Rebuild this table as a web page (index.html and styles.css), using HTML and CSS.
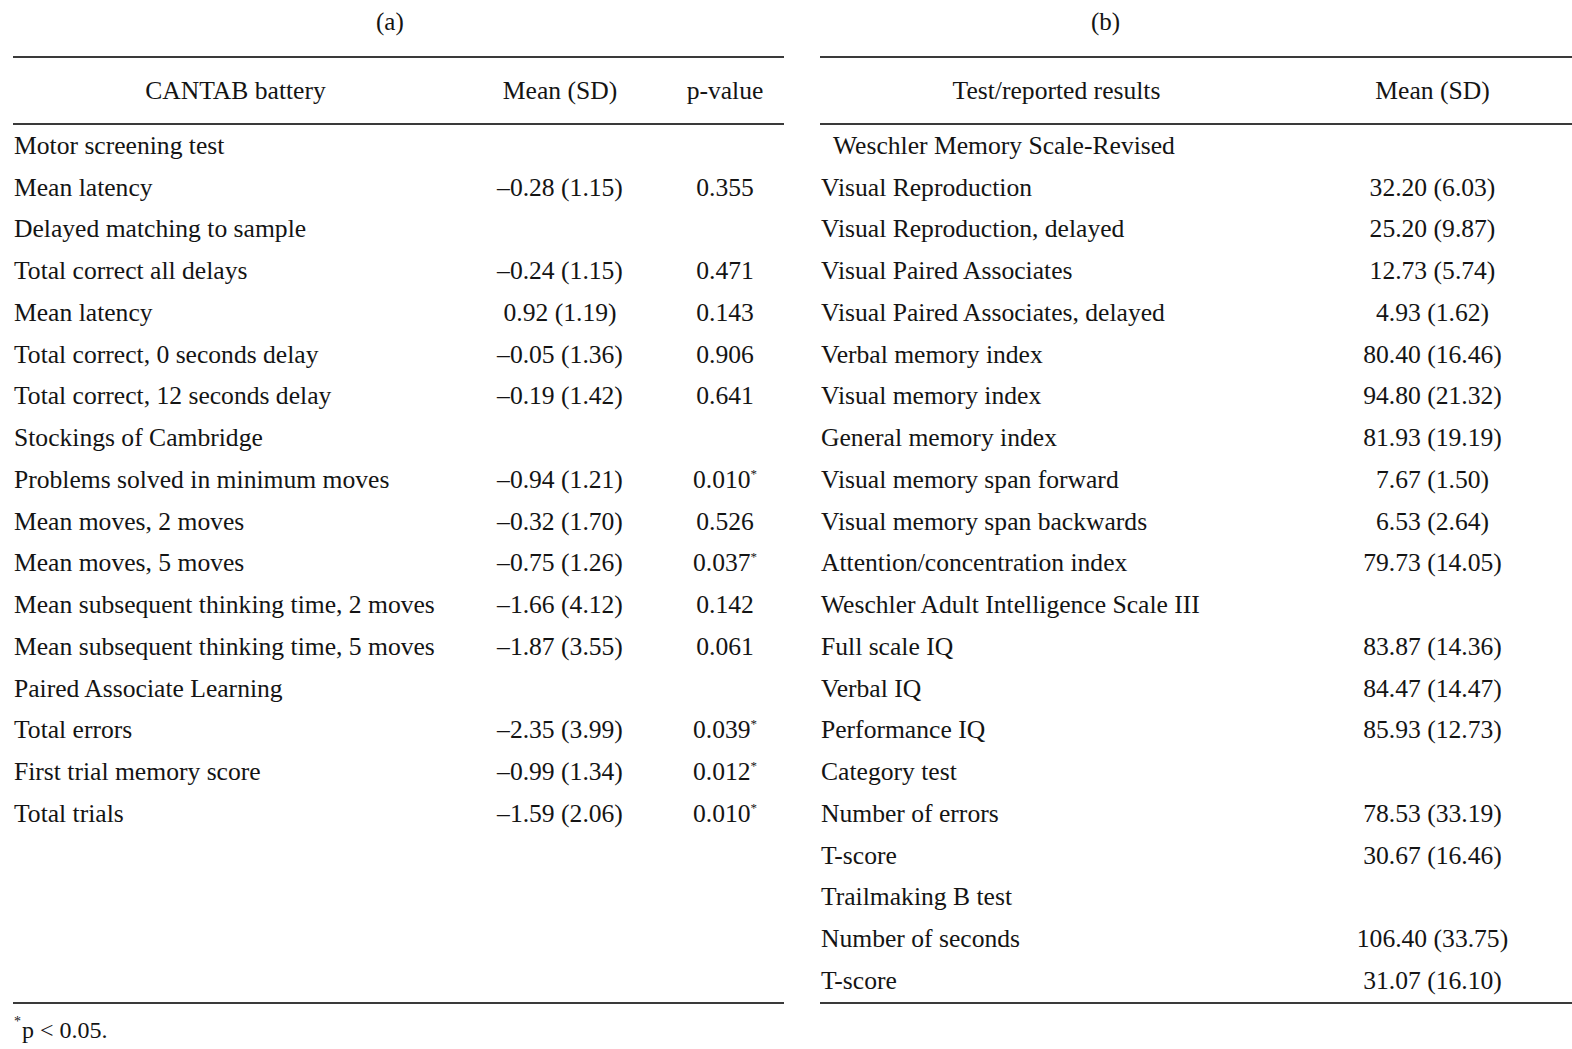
FILE: index.html
```html
<!DOCTYPE html>
<html>
<head>
<meta charset="utf-8">
<link rel="stylesheet" href="styles.css">
</head>
<body>
<div class="page">
  <div class="panels">
    <section class="panel panel-a">
      <div class="caption">(a)</div>
      <div class="tbl">
        <div class="row head">
          <div class="c c1 center">CANTAB battery</div>
          <div class="c center">Mean (SD)</div>
          <div class="c center pcol">p-value</div>
        </div>
        <div class="body">
          <div class="row"><div class="c c1">Motor screening test</div><div class="c"></div><div class="c"></div></div>
          <div class="row"><div class="c c1">Mean latency</div><div class="c center">–0.28 (1.15)</div><div class="c center pcol">0.355</div></div>
          <div class="row"><div class="c c1">Delayed matching to sample</div><div class="c"></div><div class="c"></div></div>
          <div class="row"><div class="c c1">Total correct all delays</div><div class="c center">–0.24 (1.15)</div><div class="c center pcol">0.471</div></div>
          <div class="row"><div class="c c1">Mean latency</div><div class="c center">0.92 (1.19)</div><div class="c center pcol">0.143</div></div>
          <div class="row"><div class="c c1">Total correct, 0 seconds delay</div><div class="c center">–0.05 (1.36)</div><div class="c center pcol">0.906</div></div>
          <div class="row"><div class="c c1">Total correct, 12 seconds delay</div><div class="c center">–0.19 (1.42)</div><div class="c center pcol">0.641</div></div>
          <div class="row"><div class="c c1">Stockings of Cambridge</div><div class="c"></div><div class="c"></div></div>
          <div class="row"><div class="c c1">Problems solved in minimum moves</div><div class="c center">–0.94 (1.21)</div><div class="c center pcol">0.010<sup>*</sup></div></div>
          <div class="row"><div class="c c1">Mean moves, 2 moves</div><div class="c center">–0.32 (1.70)</div><div class="c center pcol">0.526</div></div>
          <div class="row"><div class="c c1">Mean moves, 5 moves</div><div class="c center">–0.75 (1.26)</div><div class="c center pcol">0.037<sup>*</sup></div></div>
          <div class="row"><div class="c c1">Mean subsequent thinking time, 2 moves</div><div class="c center">–1.66 (4.12)</div><div class="c center pcol">0.142</div></div>
          <div class="row"><div class="c c1">Mean subsequent thinking time, 5 moves</div><div class="c center">–1.87 (3.55)</div><div class="c center pcol">0.061</div></div>
          <div class="row"><div class="c c1">Paired Associate Learning</div><div class="c"></div><div class="c"></div></div>
          <div class="row"><div class="c c1">Total errors</div><div class="c center">–2.35 (3.99)</div><div class="c center pcol">0.039<sup>*</sup></div></div>
          <div class="row"><div class="c c1">First trial memory score</div><div class="c center">–0.99 (1.34)</div><div class="c center pcol">0.012<sup>*</sup></div></div>
          <div class="row"><div class="c c1">Total trials</div><div class="c center">–1.59 (2.06)</div><div class="c center pcol">0.010<sup>*</sup></div></div>
        </div>
      </div>
    </section>
    <section class="panel panel-b">
      <div class="caption">(b)</div>
      <div class="tbl">
        <div class="row head">
          <div class="c c1 center">Test/reported results</div>
          <div class="c center">Mean (SD)</div>
        </div>
        <div class="body">
          <div class="row"><div class="c c1 indent">Weschler Memory Scale-Revised</div><div class="c"></div></div>
          <div class="row"><div class="c c1">Visual Reproduction</div><div class="c center">32.20 (6.03)</div></div>
          <div class="row"><div class="c c1">Visual Reproduction, delayed</div><div class="c center">25.20 (9.87)</div></div>
          <div class="row"><div class="c c1">Visual Paired Associates</div><div class="c center">12.73 (5.74)</div></div>
          <div class="row"><div class="c c1">Visual Paired Associates, delayed</div><div class="c center">4.93 (1.62)</div></div>
          <div class="row"><div class="c c1">Verbal memory index</div><div class="c center">80.40 (16.46)</div></div>
          <div class="row"><div class="c c1">Visual memory index</div><div class="c center">94.80 (21.32)</div></div>
          <div class="row"><div class="c c1">General memory index</div><div class="c center">81.93 (19.19)</div></div>
          <div class="row"><div class="c c1">Visual memory span forward</div><div class="c center">7.67 (1.50)</div></div>
          <div class="row"><div class="c c1">Visual memory span backwards</div><div class="c center">6.53 (2.64)</div></div>
          <div class="row"><div class="c c1">Attention/concentration index</div><div class="c center">79.73 (14.05)</div></div>
          <div class="row"><div class="c c1">Weschler Adult Intelligence Scale III</div><div class="c"></div></div>
          <div class="row"><div class="c c1">Full scale IQ</div><div class="c center">83.87 (14.36)</div></div>
          <div class="row"><div class="c c1">Verbal IQ</div><div class="c center">84.47 (14.47)</div></div>
          <div class="row"><div class="c c1">Performance IQ</div><div class="c center">85.93 (12.73)</div></div>
          <div class="row"><div class="c c1">Category test</div><div class="c"></div></div>
          <div class="row"><div class="c c1">Number of errors</div><div class="c center">78.53 (33.19)</div></div>
          <div class="row"><div class="c c1">T-score</div><div class="c center">30.67 (16.46)</div></div>
          <div class="row"><div class="c c1">Trailmaking B test</div><div class="c"></div></div>
          <div class="row"><div class="c c1">Number of seconds</div><div class="c center">106.40 (33.75)</div></div>
          <div class="row"><div class="c c1">T-score</div><div class="c center">31.07 (16.10)</div></div>
        </div>
      </div>
    </section>
  </div>
  <p class="footnote"><sup>*</sup>p &lt; 0.05.</p>
</div>
</body>
</html>
```

FILE: styles.css
```css
html, body {
  margin: 0;
  padding: 0;
  background: #ffffff;
}

body {
  font-family: "Liberation Serif", "Times New Roman", serif;
  font-size: 25.6px;
  color: #141414;
}

.page {
  width: 1572px;
  padding-left: 13px;
  box-sizing: border-box;
}

.panels {
  display: flex;
  align-items: stretch;
}

.panel {
  display: flex;
  flex-direction: column;
}

.panel-a {
  width: 771px;
}

.panel-b {
  width: 752px;
  margin-left: 36px;
}

.caption {
  height: 44px;
  line-height: 44px;
  margin-bottom: 12px;
  font-size: 25px;
}

.panel-a .caption {
  padding-left: 363px;
}

.panel-b .caption {
  padding-left: 271px;
}

.tbl {
  flex: 1;
  border-top: 2px solid #3a3a3a;
  border-bottom: 2px solid #3a3a3a;
  display: flex;
  flex-direction: column;
}

.row {
  display: grid;
  height: 41.75px;
  align-items: center;
}

.panel-a .row {
  grid-template-columns: 445px 204px 122px;
}

.panel-b .row {
  grid-template-columns: 473px 279px;
}

.row.head {
  height: 65px;
  border-bottom: 2px solid #3a3a3a;
}

.c {
  white-space: nowrap;
  line-height: 30px;
}

.c1 {
  padding-left: 1px;
}

.c1.center {
  padding-left: 0;
}

.center {
  text-align: center;
}

.pcol {
  padding-left: 4px;
}

.indent {
  padding-left: 13px;
}

sup {
  font-size: 13px;
  line-height: 0;
  vertical-align: 10px;
}

.footnote {
  margin: 11px 0 0 7px;
  font-size: 24px;
  line-height: 30px;
}

.footnote sup {
  font-size: 14px;
  vertical-align: 12px;
  margin-left: -6px;
  margin-right: 1px;
}
```
